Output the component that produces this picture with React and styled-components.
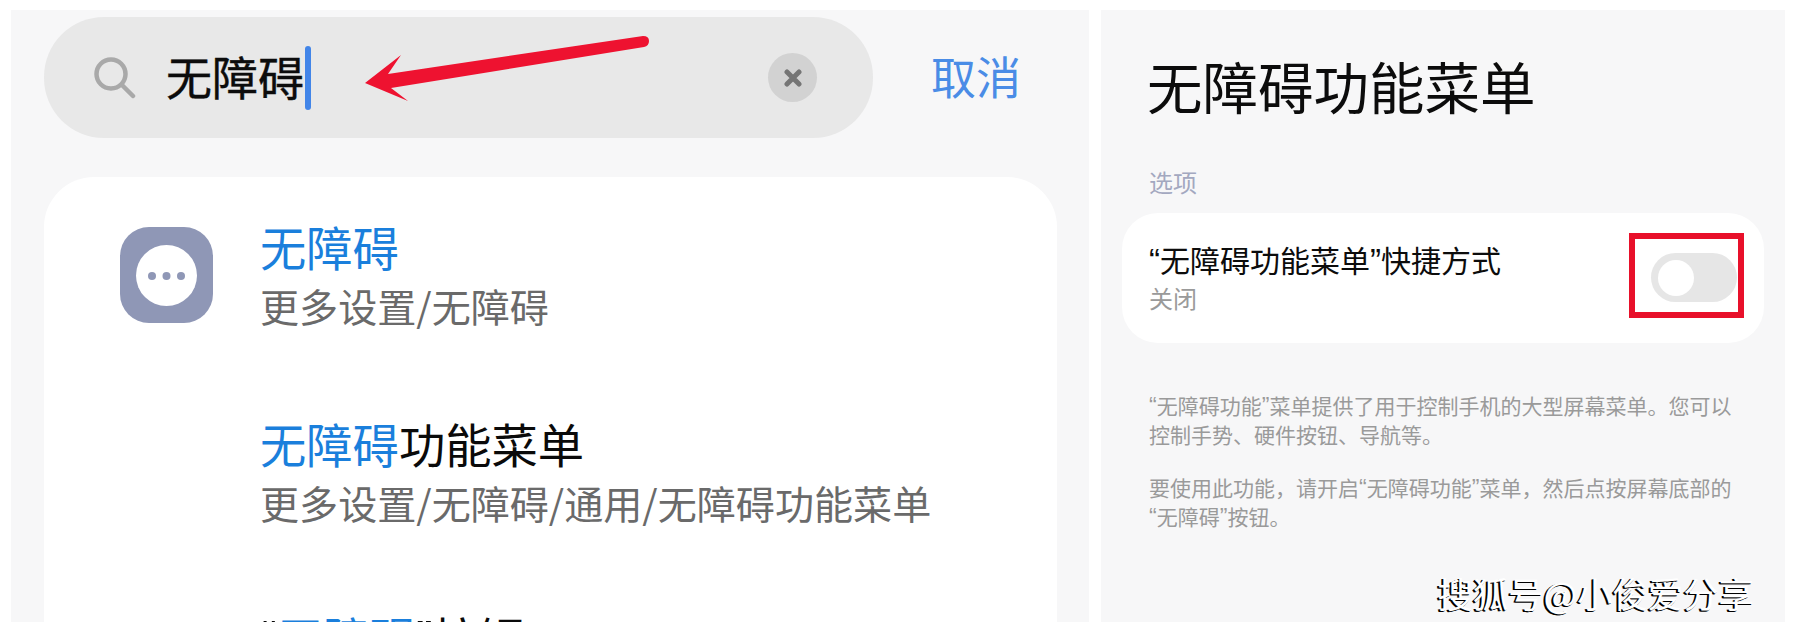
import React from "react";
import styled, { createGlobalStyle } from "styled-components";

const GlobalStyle = createGlobalStyle`
  html, body {
    margin: 0;
    padding: 0;
    background: #fff;
  }
  body {
    font-family: "Noto Sans CJK SC", "Noto Sans", sans-serif;
  }
`;

const Page = styled.div`
  display: flex;
  gap: 12px;
  width: 1796px;
  height: 633px;
  padding: 10px 11px 11px;
  box-sizing: border-box;
  overflow: hidden;
`;

const Panel = styled.section`
  position: relative;
  flex: none;
  width: ${(p) => p.$width}px;
  height: 612px;
  box-sizing: border-box;
  padding: ${(p) => p.$padding};
  background: #f7f7f8;
  overflow: hidden;
`;

const SearchRow = styled.div`
  display: flex;
  align-items: center;
`;

const SearchBar = styled.div`
  position: relative;
  display: flex;
  align-items: center;
  width: 829px;
  height: 121px;
  box-sizing: border-box;
  padding: 0 56px 0 50px;
  border-radius: 60px;
  background: #e8e8e8;
`;

const SearchInput = styled.span`
  margin: -6px 0 0 30px;
  font-size: 46px;
  line-height: 64px;
  color: #0c0c0c;
  -webkit-text-stroke: 0.4px #0c0c0c;
`;

const Caret = styled.i`
  width: 6px;
  height: 64px;
  margin-left: 1px;
  border-radius: 3px;
  background: #4285e8;
`;

const ClearButton = styled.span`
  display: flex;
  align-items: center;
  justify-content: center;
  width: 49px;
  height: 49px;
  margin-left: auto;
  border-radius: 50%;
  background: #d2d2d2;
`;

const Arrow = styled.svg`
  position: absolute;
  left: 316px;
  top: 13px;
`;

const CancelLink = styled.span`
  margin: -3px 0 0 58px;
  font-size: 45px;
  line-height: 64px;
  color: #4a8ce6;
`;

const ResultCard = styled.div`
  display: flex;
  flex-direction: column;
  gap: 90px;
  width: 1013px;
  height: 600px;
  margin-top: 39px;
  padding: 44px 0 0 76px;
  box-sizing: border-box;
  border-radius: 50px 50px 0 0;
  background: #fff;
`;

const ResultRow = styled.div`
  display: flex;
  margin-top: ${(p) => p.$shift || 0}px;
`;

const IconSlot = styled.div`
  flex: none;
  width: 140px;
  height: 96px;
  padding-top: 6px;
`;

const AppIcon = styled.div`
  display: flex;
  align-items: center;
  justify-content: center;
  width: 93px;
  height: 96px;
  border-radius: 29px;
  background: #8f97b6;
`;

const ResultTitle = styled.div`
  font-size: 46.3px;
  line-height: 50px;
  color: #0a0a0a;
  white-space: nowrap;
`;

const Match = styled.span`
  color: #1a7fdc;
`;

const ResultPath = styled.div`
  margin-top: 11px;
  font-size: 39.1px;
  line-height: 46px;
  color: #6a6a6a;
  white-space: nowrap;
`;

const PageTitle = styled.h1`
  margin: 0 0 0 25px;
  font-size: 55.5px;
  font-weight: 400;
  line-height: 70px;
  color: #0c0c0c;
`;

const SectionLabel = styled.div`
  margin: 47px 0 16px 27px;
  font-size: 24px;
  line-height: 30px;
  color: #a3a8c0;
`;

const OptionCard = styled.div`
  display: flex;
  justify-content: space-between;
  align-items: center;
  height: 130px;
  box-sizing: border-box;
  padding: 0 20px 0 27px;
  border-radius: 36px;
  background: #fff;
`;

const OptionName = styled.div`
  font-size: 30px;
  line-height: 36px;
  color: #0c0c0c;
  white-space: nowrap;
`;

const OptionState = styled.div`
  margin-top: 1px;
  font-size: 24px;
  line-height: 36px;
  color: #9a9a9a;
`;

const Quote = styled.span`
  font-family: "Liberation Sans", sans-serif;
  font-size: 1.1em;
`;

const Highlight = styled.div`
  display: flex;
  width: 115px;
  height: 85px;
  margin-bottom: 5px;
  padding: 14px 1px 10px 16px;
  box-sizing: border-box;
  border: 6px solid #e8102a;
`;

const Toggle = styled.div`
  display: flex;
  align-items: center;
  width: 86px;
  height: 49px;
  padding-left: 7px;
  box-sizing: border-box;
  border-radius: 25px;
  background: #e6e6e6;
`;

const Knob = styled.span`
  width: 36px;
  height: 36px;
  border-radius: 50%;
  background: #fff;
`;

const Note = styled.p`
  margin: ${(p) => p.$top}px 0 0 27px;
  font-size: 21px;
  line-height: 28px;
  color: #9a9a9a;
  white-space: nowrap;
`;

const Watermark = styled.div`
  position: absolute;
  right: 31px;
  bottom: 7px;
  font-size: 35.4px;
  line-height: 44px;
  color: #fff;
  text-shadow: -1px 1px 0 #000, -2px 1px 0 #000;
  white-space: nowrap;
`;

function SearchIcon() {
  return (
    <svg width="42" height="44" viewBox="0 0 42 44" fill="none" stroke="#a9a9a9" strokeWidth="4.5" strokeLinecap="round">
      <circle cx="17" cy="18" r="14.5" />
      <path d="M28 29 L39 40" />
    </svg>
  );
}

function ClearIcon() {
  return (
    <svg width="18" height="18" viewBox="0 0 18 18" fill="none" stroke="#757575" strokeWidth="5" strokeLinecap="round">
      <path d="M3 3 L15 15 M15 3 L3 15" />
    </svg>
  );
}

function RedArrow() {
  return (
    <Arrow width="300" height="80" viewBox="360 30 300 80">
      <path
        d="M365 83 L401 55 L388 74 L643 36 Q649 36 649 41 Q649 46 644 47 L391 88 L408 101 Z"
        fill="#ee1230"
      />
    </Arrow>
  );
}

function DotsIcon() {
  return (
    <svg width="61" height="61" viewBox="0 0 61 61">
      <circle cx="30.5" cy="30.5" r="30.5" fill="#fff" />
      <circle cx="16" cy="31" r="4" fill="#8f97b6" />
      <circle cx="30.5" cy="31" r="4" fill="#8f97b6" />
      <circle cx="45" cy="31" r="4" fill="#8f97b6" />
    </svg>
  );
}

export default function App() {
  return (
    <Page>
      <GlobalStyle />
      <Panel $width={1078} $padding="7px 0 0 33px">
        <SearchRow>
          <SearchBar>
            <SearchIcon />
            <SearchInput>无障碍</SearchInput>
            <Caret />
            <ClearButton>
              <ClearIcon />
            </ClearButton>
            <RedArrow />
          </SearchBar>
          <CancelLink>取消</CancelLink>
        </SearchRow>
        <ResultCard>
          <ResultRow>
            <IconSlot>
              <AppIcon>
                <DotsIcon />
              </AppIcon>
            </IconSlot>
            <div>
              <ResultTitle>
                <Match>无障碍</Match>
              </ResultTitle>
              <ResultPath>更多设置/无障碍</ResultPath>
            </div>
          </ResultRow>
          <ResultRow>
            <IconSlot />
            <div>
              <ResultTitle>
                <Match>无障碍</Match>功能菜单
              </ResultTitle>
              <ResultPath>更多设置/无障碍/通用/无障碍功能菜单</ResultPath>
            </div>
          </ResultRow>
          <ResultRow $shift={-3}>
            <IconSlot />
            <div>
              <ResultTitle>
                <Quote>“</Quote>
                <Match>无障碍</Match>
                <Quote>”</Quote>按钮
              </ResultTitle>
            </div>
          </ResultRow>
        </ResultCard>
      </Panel>
      <Panel $width={684} $padding="40px 21px 0">
        <PageTitle>无障碍功能菜单</PageTitle>
        <SectionLabel>选项</SectionLabel>
        <OptionCard>
          <div>
            <OptionName>
              <Quote>“</Quote>无障碍功能菜单<Quote>”</Quote>快捷方式
            </OptionName>
            <OptionState>关闭</OptionState>
          </div>
          <Highlight>
            <Toggle>
              <Knob />
            </Toggle>
          </Highlight>
        </OptionCard>
        <Note $top={48}>
          <Quote>“</Quote>无障碍功能<Quote>”</Quote>菜单提供了用于控制手机的大型屏幕菜单。您可以
          <br />
          控制手势、硬件按钮、导航等。
        </Note>
        <Note $top={25}>
          要使用此功能，请开启<Quote>“</Quote>无障碍功能<Quote>”</Quote>菜单，然后点按屏幕底部的
          <br />
          <Quote>“</Quote>无障碍<Quote>”</Quote>按钮。
        </Note>
        <Watermark>搜狐号@小俊爱分享</Watermark>
      </Panel>
    </Page>
  );
}
